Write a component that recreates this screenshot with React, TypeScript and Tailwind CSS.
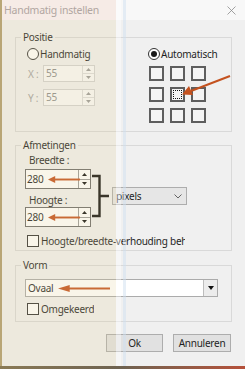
import React from 'react';

function Radio({ checked, label }: { checked?: boolean; label: string }) {
  return (
    <div className="flex h-[14px] items-center gap-[1px]">
      <span className="flex h-[12px] w-[12px] items-center justify-center rounded-full border border-[#333] bg-white">
        {checked && <span className="h-[6px] w-[6px] rounded-full bg-[#1a1a1a]" />}
      </span>
      <span>{label}</span>
    </div>
  );
}

function Check({ label, className = '' }: { label: string; className?: string }) {
  return (
    <div className="flex h-[12px] items-center gap-[2px]">
      <span className="h-[12px] w-[12px] shrink-0 border border-[#333] bg-white" />
      <span className={`overflow-hidden whitespace-nowrap ${className}`}>{label}</span>
    </div>
  );
}

function Spinner({ disabled }: { disabled?: boolean }) {
  const c = disabled ? '#9a9a9a' : '#111';
  return (
    <div className={`flex w-[12px] flex-col border-l ${disabled ? 'border-[#dcdcdc]' : 'border-[#9a9a9a]'}`}>
      <div className="flex flex-1 items-center justify-center">
        <svg width="5" height="3" viewBox="0 0 5 3"><path d="M0 3 L2.5 0 L5 3Z" fill={c} /></svg>
      </div>
      <div className={`flex flex-1 items-center justify-center border-t ${disabled ? 'border-[#dcdcdc]' : 'border-[#9a9a9a]'}`}>
        <svg width="5" height="3" viewBox="0 0 5 3"><path d="M0 0 L2.5 3 L5 0Z" fill={c} /></svg>
      </div>
    </div>
  );
}

function LeftArrow({ className }: { className: string }) {
  return (
    <svg className={className} viewBox="0 0 40 8" preserveAspectRatio="none">
      <path d="M6 4 H40" stroke="#c4521f" strokeWidth="2.2" />
      <path d="M0 4 L9 0 L9 8Z" fill="#c4521f" />
    </svg>
  );
}

function NumInput({ value }: { value: string }) {
  return (
    <div className="relative flex h-[20px] w-[66px] border border-[#6b6b6b] bg-white">
      <span className="flex-1 pl-[1px] leading-[18px]">{value}</span>
      <Spinner />
      <LeftArrow className="absolute left-[22px] top-[6px] h-[7px] w-[32px]" />
    </div>
  );
}

export default function App() {
  return (
    <div className="relative h-[369px] w-[245px] overflow-hidden bg-[#f0f0f0] font-['Noto_Sans',sans-serif] text-[10px] leading-[14px] tracking-[-0.25px] text-[#1f1f1f]">
      {/* title bar */}
      <div className="flex h-[20px] items-center justify-between bg-[#f8f8f8] pl-[4px] pr-[9px] text-[10.5px] text-[#9c9c9c]">
        <span>Handmatig instellen</span>
        <svg width="9" height="9" viewBox="0 0 9 9">
          <path d="M0.5 0.5 L8.5 8.5 M8.5 0.5 L0.5 8.5" stroke="#8a8a8a" strokeWidth="0.8" />
        </svg>
      </div>

      <div className="pl-[15px] pt-[10px]">
        {/* Positie */}
        <fieldset className="w-[217px] border border-[#d9d9d9] pb-[8px]">
          <legend className="ml-[5px] px-[2px]">Positie</legend>
          <div className="flex pl-[11px] pt-[3px]">
            <div className="w-[121px]">
              <Radio label="Handmatig" />
              <div className="mt-[4px] flex items-center">
                <span className="w-[16px] pl-[1px] text-[#a3a3a3]">X :</span>
                <div className="flex h-[17px] w-[52px] border border-[#d2d2d2] bg-[#f9f9f9]">
                  <span className="flex-1 pl-[2px] leading-[15px] text-[#8d8d8d]">55</span>
                  <Spinner disabled />
                </div>
              </div>
              <div className="mt-[7px] flex items-center">
                <span className="w-[16px] pl-[1px] text-[#a3a3a3]">Y :</span>
                <div className="flex h-[17px] w-[52px] border border-[#d2d2d2] bg-[#f9f9f9]">
                  <span className="flex-1 pl-[2px] leading-[15px] text-[#8d8d8d]">55</span>
                  <Spinner disabled />
                </div>
              </div>
            </div>
            <div className="relative">
              <Radio checked label="Automatisch" />
              <div className="ml-[1px] mt-[5px] grid w-fit grid-cols-3 gap-[6px]">
                {Array.from({ length: 9 }).map((_, i) => (
                  <div key={i} className="flex h-[15px] w-[15px] items-center justify-center border-2 border-[#5e5e5e] bg-[#f4f4f4]">
                    {i === 4 && <div className="h-[9px] w-[9px] border border-dotted border-[#111]" />}
                  </div>
                ))}
              </div>
              <svg className="absolute left-[34px] top-[28px] h-[22px] w-[50px]" viewBox="0 0 50 22">
                <path d="M48 1 L9 16" stroke="#c4521f" strokeWidth="2" />
                <path d="M0 19.5 L7 11 L11 20Z" fill="#c4521f" />
              </svg>
            </div>
          </div>
        </fieldset>

        {/* Afmetingen */}
        <fieldset className="mt-[6px] w-[217px] border border-[#d9d9d9] pb-[3px]">
          <legend className="ml-[5px] px-[2px]">Afmetingen</legend>
          <div className="pl-[9px] pt-[1px]">
            <div className="flex">
              <div className="w-[66px]">
                <div className="pl-[4px]">Breedte :</div>
                <div className="mt-[2px]"><NumInput value="280" /></div>
                <div className="mt-[4px] pl-[4px]">Hoogte :</div>
                <div><NumInput value="280" /></div>
              </div>
              <svg width="21" height="74" viewBox="0 0 21 74">
                <path d="M1 23 H8.5 V63 H1 M8.5 43 H18" stroke="#111" strokeWidth="2.4" fill="none" />
              </svg>
              <div className="mt-[34px] flex h-[18px] w-[75px] items-center justify-between border border-[#adadad] bg-[#e6e6e6] pl-[3px] pr-[4px]">
                <span>pixels</span>
                <svg width="8" height="5" viewBox="0 0 8 5">
                  <path d="M0.5 0.5 L4 4 L7.5 0.5" stroke="#555" strokeWidth="0.9" fill="none" />
                </svg>
              </div>
            </div>
            <div className="ml-[2px] mt-[8px]">
              <Check label="Hoogte/breedte-verhouding behouden" className="w-[144px]" />
            </div>
          </div>
        </fieldset>

        {/* Vorm */}
        <fieldset className="mt-[7px] w-[217px] border border-[#d9d9d9] pb-[6px]">
          <legend className="ml-[5px] px-[2px]">Vorm</legend>
          <div className="pl-[9px]">
            <div className="relative mt-[7px] flex h-[18px] w-[193px] items-center justify-between border border-[#ababab] bg-white pl-[2px]">
              <span>Ovaal</span>
              <div className="flex h-full w-[14px] items-center justify-center border-l border-[#bdbdbd] bg-[#ececec]">
                <svg width="6" height="4" viewBox="0 0 6 4"><path d="M0 0 H6 L3 4Z" fill="#111" /></svg>
              </div>
              <LeftArrow className="absolute left-[32px] top-[5px] h-[7px] w-[52px]" />
            </div>
            <div className="ml-[2px] mt-[6px]">
              <Check label="Omgekeerd" />
            </div>
          </div>
        </fieldset>

        {/* buttons */}
        <div className="mt-[12px] flex w-[216px] justify-end gap-[10px]">
          <button className="h-[18px] w-[57px] border border-[#adadad] bg-[#e1e1e1] leading-[16px]">Ok</button>
          <button className="h-[18px] w-[58px] border border-[#adadad] bg-[#e1e1e1] leading-[16px]">Annuleren</button>
        </div>
      </div>

      {/* translucent window behind on the left, and window edges */}
      <div className="pointer-events-none absolute left-0 top-0 h-[20px] w-[116px] bg-[#eec2b0]/25" />
      <div className="pointer-events-none absolute bottom-0 left-0 top-[20px] w-[116px] bg-[#e0cf90]/20" />
      <div className="pointer-events-none absolute bottom-0 left-[116px] top-0 w-[5px] bg-white/40" />
      <div className="pointer-events-none absolute bottom-0 left-[123px] top-0 w-[3px] bg-[#cfe0ef]/50" />
      <div className="pointer-events-none absolute bottom-0 left-0 top-0 w-[2px] bg-[#b9a676]" />
      <div className="pointer-events-none absolute bottom-0 left-0 h-[3px] w-full bg-gradient-to-r from-[#8a7a55] via-[#6e6250] to-[#b5503a]" />
    </div>
  );
}
